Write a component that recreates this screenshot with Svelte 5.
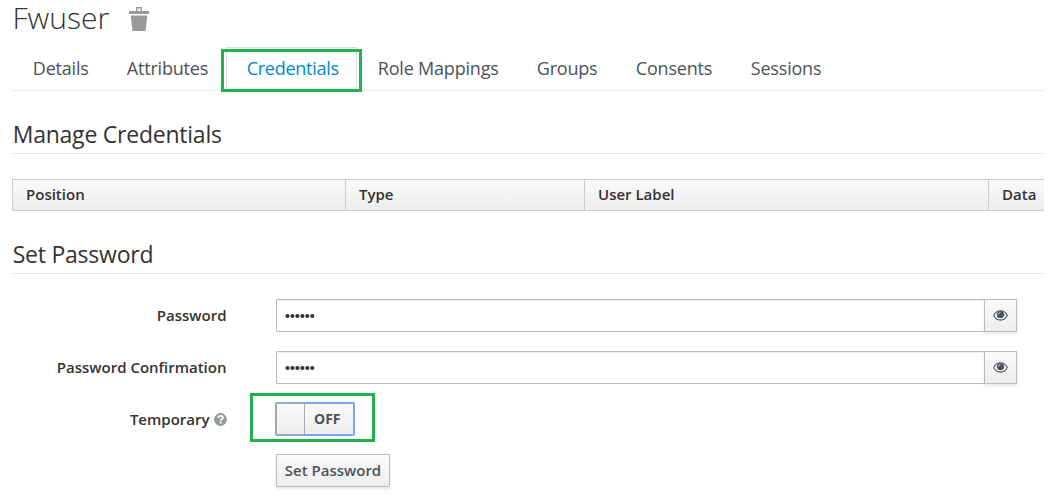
<script>
  const tabs = [
    { name: 'Details', width: 94 },
    { name: 'Attributes', width: 120 },
    { name: 'Credentials', width: 131 },
    { name: 'Role Mappings', width: 159 },
    { name: 'Groups', width: 99 },
    { name: 'Consents', width: 115 },
    { name: 'Sessions', width: 110 }
  ];
  const active = 'Credentials';
  const columns = ['Position', 'Type', 'User Label', 'Data'];
  const fields = ['Password', 'Password Confirmation'];
</script>

<main>
  <header>
    <h1>Fwuser</h1>
    <svg class="trash" width="20" height="24" viewBox="0 0 20 24">
      <path fill="#999" d="M0 4h7V0h6v4h7v3H0zM8.500 1.500V4h3V1.500zM1.700 8.500h16.600L16.500 24H3.500z" fill-rule="evenodd" />
    </svg>
  </header>

  <nav>
    {#each tabs as tab}
      <a class:active={tab.name === active} style:width="{tab.width}px">{tab.name}</a>
    {/each}
    <div class="mark mark-tab"></div>
  </nav>

  <h2>Manage Credentials</h2>
  <div class="table">
    {#each columns as column}
      <div class="th">{column}</div>
    {/each}
  </div>

  <h2>Set Password</h2>
  <form>
    {#each fields as field}
      <div class="row">
        <div class="label"><span>{field}</span></div>
        <div class="input">
          <svg width="30" height="6" viewBox="0 0 30 6">
            {#each [0, 1, 2, 3, 4, 5] as dot}
              <circle cx={2.5 + dot * 4.95} cy="3" r="2.1" fill="#333" />
            {/each}
          </svg>
        </div>
        <div class="eye">
          <svg width="15" height="11" viewBox="0 0 15 11">
            <path d="M.7 5.500C2.300 2.300 4.700.8 7.500.8s5.200 1.500 6.800 4.700c-1.600 3.100-4 4.600-6.800 4.600S2.300 8.600.7 5.500z" fill="#fff" stroke="#4d5258" stroke-width="1.100" />
            <circle cx="7.500" cy="4.600" r="3.700" fill="#4d5258" />
            <path d="M5.500 4.500a2 2 0 0 1 2-2" fill="none" stroke="#ddd" stroke-width=".8" />
          </svg>
        </div>
      </div>
    {/each}
    <div class="row">
      <div class="label">
        <span>Temporary</span>
        <svg class="help" width="13" height="13" viewBox="0 0 13 13">
          <circle cx="6.500" cy="6.500" r="6.400" fill="#999" />
          <path d="M4.300 4.900C4.400 3.400 5.300 2.800 6.600 2.800c1.400 0 2.300.8 2.300 1.900 0 1.500-2.200 1.500-2.200 3" fill="none" stroke="#fff" stroke-width="1.700" />
          <path d="M5.800 8.700h1.900v1.700H5.800z" fill="#fff" />
        </svg>
      </div>
      <div class="toggle">
        <div class="knob"></div>
        <div class="off"><span>OFF</span></div>
        <div class="mark mark-toggle"></div>
      </div>
    </div>
    <div class="row last">
      <div class="label"></div>
      <div class="button"><span>Set Password</span></div>
    </div>
  </form>
</main>

<style>
  :global(body) {
    background: #fff;
    overflow: hidden;
  }
  main {
    box-sizing: border-box;
    width: 1044px;
    height: 498px;
    padding-left: 12px;
    font-family: "Open Sans", sans-serif;
    font-size: 15px;
    color: #333;
  }
  header {
    display: flex;
    height: 47px;
  }
  h1 {
    box-sizing: border-box;
    margin: 0;
    width: 117px;
    padding-left: 0.500px;
    font-size: 30px;
    font-weight: 300;
    line-height: 36px;
    white-space: nowrap;
  }
  .trash {
    margin-top: 7px;
  }
  nav {
    position: relative;
    display: flex;
    box-sizing: border-box;
    height: 44px;
    border-bottom: 1px solid #ececec;
  }
  nav a {
    box-sizing: border-box;
    height: 43px;
    padding-left: 20.800px;
    font-size: 18px;
    letter-spacing: -0.200px;
    line-height: 43px;
    color: #4d5258;
    white-space: nowrap;
  }
  nav a.active {
    padding-left: 19.700px;
    letter-spacing: -0.270px;
    color: #0088ce;
    border: 1px solid #dcdcdc;
    border-bottom: 0;
    line-height: 41px;
  }
  .mark {
    position: absolute;
    box-sizing: border-box;
    border: 3px solid #22b14c;
  }
  .mark-tab {
    left: 209px;
    top: 2px;
    width: 141px;
    height: 43px;
  }
  h2 {
    box-sizing: border-box;
    height: 39px;
    margin: 24px 0 25px;
    border-bottom: 1px solid #e2e2e2;
    padding-left: 0.700px;
    font-size: 23px;
    font-weight: 400;
    letter-spacing: -0.230px;
    line-height: 39px;
  }
  .table {
    display: grid;
    grid-template-columns: 333px 239px 404px 56px;
    box-sizing: border-box;
    height: 32px;
    border-top: 1px solid #ccc;
    border-bottom: 1px solid #ccc;
    background: linear-gradient(#fafafa, #ededed);
  }
  .th {
    border-left: 1px solid #ccc;
    padding-left: 13px;
    font-weight: 600;
    line-height: 29px;
    white-space: nowrap;
  }
  form {
    display: flex;
    flex-direction: column;
    gap: 19px;
  }
  .row {
    display: flex;
    height: 33px;
  }
  .last {
    margin-top: -1px;
  }
  .label {
    display: flex;
    justify-content: flex-end;
    align-items: center;
    box-sizing: border-box;
    width: 214.500px;
    padding-bottom: 2px;
    margin-right: 49.500px;
    font-weight: 600;
    white-space: nowrap;
  }
  .help {
    margin-left: 4px;
    margin-top: 1px;
  }
  .input {
    display: flex;
    align-items: center;
    box-sizing: border-box;
    width: 709px;
    border: 1px solid #bbb;
    border-radius: 1px 0 0 1px;
    padding-left: 8px;
    box-shadow: inset 0 1px 1px rgba(3, 3, 3, 0.075);
  }
  .eye,
  .button {
    display: flex;
    align-items: center;
    justify-content: center;
    box-sizing: border-box;
    border: 1px solid #bbb;
    background: linear-gradient(#fafafa, #ededed);
    box-shadow: 0 2px 3px rgba(3, 3, 3, 0.1);
  }
  .eye {
    width: 33px;
    margin-left: -1px;
  }
  .button {
    width: 114px;
    padding-bottom: 2px;
    font-weight: 600;
    color: #4d5258;
    border-radius: 1px;
    white-space: nowrap;
  }
  .toggle {
    position: relative;
    display: flex;
    box-sizing: border-box;
    width: 80px;
    height: 34px;
    margin: -1px 0 0 -1px;
    border: 2px solid #7ba8ec;
    border-radius: 2px;
  }
  .knob {
    box-sizing: border-box;
    width: 29px;
    margin: -1px 0 -1px -1px;
    border: 1px solid #aaa;
    background: linear-gradient(#fafafa, #ededed);
  }
  .off {
    display: flex;
    flex: 1;
    align-items: center;
    padding: 0 0 2px 9px;
    background: linear-gradient(#fafafa, #ededed);
    font-size: 14px;
    font-weight: 700;
    color: #4d5258;
  }
  .mark-toggle {
    left: -27px;
    top: -11px;
    width: 125px;
    height: 49px;
  }
</style>
